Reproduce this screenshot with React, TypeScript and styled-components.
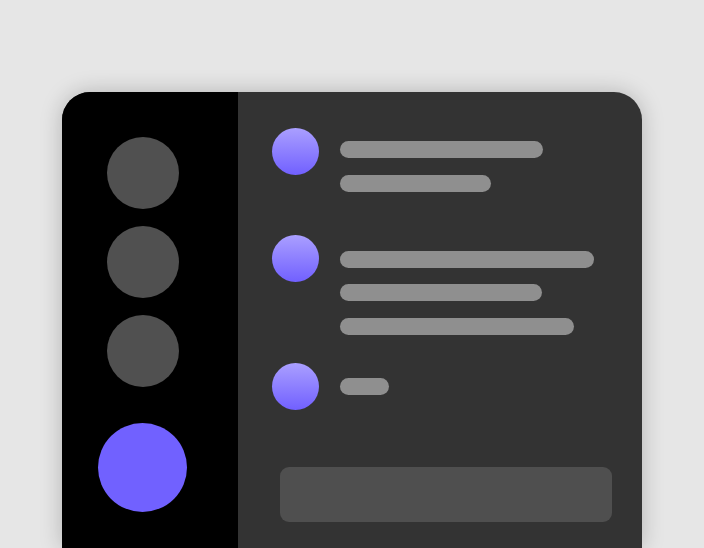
import styled, { createGlobalStyle } from "styled-components";

const GlobalStyle = createGlobalStyle`
  html, body {
    margin: 0;
    padding: 0;
    background: #e6e6e6;
    overflow: hidden;
    font-family: "Liberation Sans", Arial, sans-serif;
  }
`;

interface Message {
  id: number;
  lines: number[];
  offset: number;
  gap: number;
}

const messages: Message[] = [
  { id: 1, lines: [203, 151], offset: 13, gap: 0 },
  { id: 2, lines: [254, 202, 234], offset: 16, gap: 43 },
  { id: 3, lines: [49], offset: 15, gap: 28 },
];

const App = () => {
  return (
    <Page>
      <GlobalStyle />
      <Card>
        <Sidebar>
          <Server />
          <Server />
          <Server />
          <Server active />
        </Sidebar>

        <Chat>
          {messages.map((m) => (
            <Row key={m.id} gap={m.gap}>
              <Avatar />
              <Lines offset={m.offset}>
                {m.lines.map((w, i) => (
                  <Line key={i} style={{ width: w }} />
                ))}
              </Lines>
            </Row>
          ))}
          <Composer />
        </Chat>
      </Card>
    </Page>
  );
};

const Page = styled.div`
  height: 548px;
  padding: 92px 0 0 62px;
  box-sizing: border-box;
`;

const Card = styled.div`
  width: 580px;
  height: 456px;
  display: flex;
  border-radius: 28px 28px 0 0;
  overflow: hidden;
  background: #333333;
  box-shadow: 0 0 22px rgba(0, 0, 0, 0.22);
`;

const Sidebar = styled.div`
  width: 176px;
  flex-shrink: 0;
  background: #000;
  padding: 45px 15px 0 0;
  box-sizing: border-box;
  display: flex;
  flex-direction: column;
  align-items: center;
  gap: 17px;
`;

const Server = styled.div<{ active?: boolean }>`
  width: ${({ active }) => (active ? "89px" : "72px")};
  height: ${({ active }) => (active ? "89px" : "72px")};
  margin-top: ${({ active }) => (active ? "19px" : "0")};
  border-radius: 50%;
  background: ${({ active }) => (active ? "#7161ff" : "#505050")};
`;

const Chat = styled.div`
  flex: 1;
  padding: 36px 30px 0 34px;
  display: flex;
  flex-direction: column;
`;

const Row = styled.div<{ gap: number }>`
  display: flex;
  align-items: flex-start;
  gap: 21px;
  margin-top: ${({ gap }) => gap}px;
`;

const Avatar = styled.div`
  width: 47px;
  height: 47px;
  flex-shrink: 0;
  border-radius: 50%;
  background: linear-gradient(180deg, #aa9fff 0%, #7160ff 100%);
`;

const Lines = styled.div<{ offset: number }>`
  display: flex;
  flex-direction: column;
  gap: 16.5px;
  padding-top: ${({ offset }) => offset}px;
`;

const Line = styled.div`
  height: 17px;
  border-radius: 9px;
  background: #8f8f8f;
`;

const Composer = styled.div`
  margin: 57px 0 0 8px;
  height: 55px;
  border-radius: 9px;
  background: #4f4f4f;
`;

export default App;
